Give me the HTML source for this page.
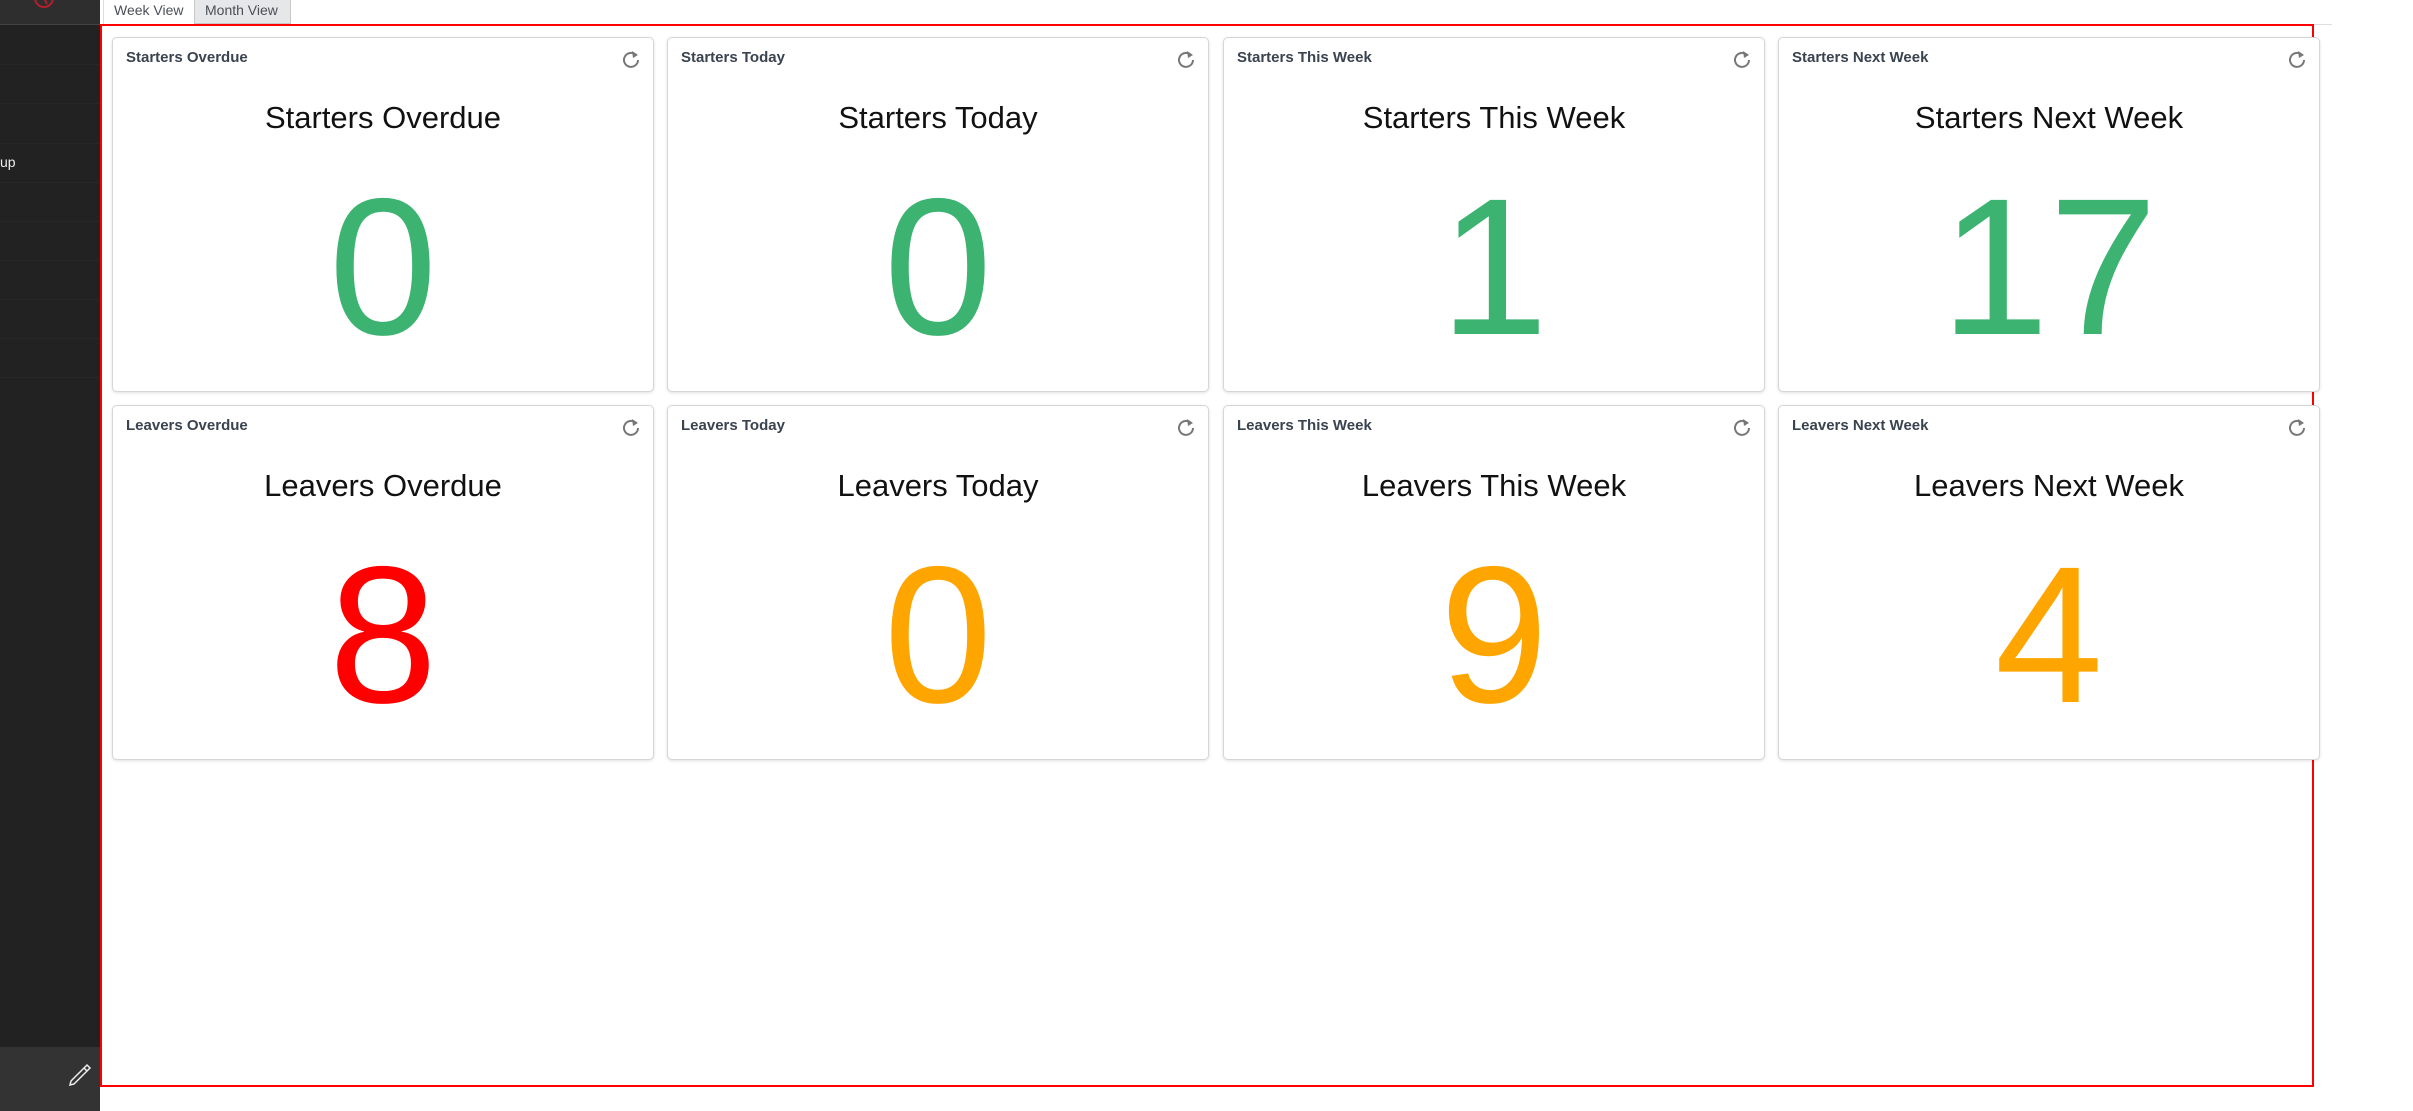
<!DOCTYPE html>
<html><head><meta charset="utf-8"><style>
*{margin:0;padding:0;box-sizing:border-box}
body{width:2413px;height:1111px;background:#fff;position:relative;overflow:hidden;font-family:"Liberation Sans",sans-serif}
#side{position:absolute;left:0;top:0;width:100px;height:1111px;background:#222}
#side .hd{position:absolute;left:0;top:0;width:100px;height:25px;background:#2e2e2e;border-bottom:1px solid #444;overflow:hidden}
#side .ln{position:absolute;left:0;width:100px;height:1px;background:#272727}
#side .ft{position:absolute;left:0;top:1047px;width:100px;height:64px;background:#333}
.tab{position:absolute;top:0;height:24px;font-size:14px;color:#4a4f57;line-height:20px;padding-left:10px}
#red{position:absolute;left:100px;top:24px;width:2214px;height:1063px;border:2px solid #f00}
.gl{position:absolute;left:290px;top:24px;width:2042px;height:1px;background:#ddd}
.card{position:absolute;width:542px;height:355px;border:1px solid #d6d6d6;border-radius:5px;background:#fff;box-shadow:0 1px 3px rgba(0,0,0,.12)}
.card .t{position:absolute;left:13px;top:13px;font-size:15px;line-height:14.5px;font-weight:bold;color:#3a4350;white-space:nowrap}
.card .b{position:absolute;left:0;width:100%;top:64px;text-align:center;font-size:31px;line-height:31px;color:#111;white-space:nowrap}
.card .n{position:absolute;left:0;width:100%;top:132px;text-align:center;font-size:195px;line-height:195px;white-space:nowrap}
.card svg{position:absolute;right:13px;top:11px}
.g{color:#3cb371}.r{color:#f00}.o{color:#ffa500}
</style></head><body>
<div id="side">
<div class="hd"><svg width="100" height="25" style="position:absolute;left:0;top:0"><circle cx="44" cy="-2" r="9" fill="none" stroke="#b0202a" stroke-width="2"/><path d="M44 -2 L47 4" stroke="#b0202a" stroke-width="2"/></svg></div>
<div class="ln" style="top:64px"></div><div class="ln" style="top:103px"></div><div class="ln" style="top:143px"></div><div class="ln" style="top:182px"></div><div class="ln" style="top:221px"></div><div class="ln" style="top:260px"></div><div class="ln" style="top:299px"></div><div class="ln" style="top:338px"></div><div class="ln" style="top:377px"></div>
<div style="position:absolute;left:0;top:154px;color:#eee;font-size:14px">up</div>
<div class="ft"><svg width="100" height="64" style="position:absolute;left:0;top:0"><path d="M71 34 L87 18 L90 21 L74 37 L70 38 Z M84 21 L87 24" fill="none" stroke="#eee" stroke-width="1.5"/></svg></div>
</div>
<div class="tab" style="left:103px;width:91px;background:#fff;border-left:1px solid #ddd">Week View</div>
<div class="tab" style="left:194px;width:97px;background:#e6e7e9;border:1px solid #c8c8c8;border-top:none">Month View</div>
<div class="gl"></div>
<div id="red"></div>

<div class="card" style="left:112px;top:37px"><div class="t">Starters Overdue</div><svg width="18" height="20" viewBox="0 0 18 20"><path d="M14 6 A7 7 0 1 0 16 11" fill="none" stroke="#777" stroke-width="2"/><path d="M10 2 L16 6 L11 9 Z" fill="#777"/></svg><div class="b">Starters Overdue</div><div class="n g">0</div></div>
<div class="card" style="left:667px;top:37px"><div class="t">Starters Today</div><svg width="18" height="20" viewBox="0 0 18 20"><path d="M14 6 A7 7 0 1 0 16 11" fill="none" stroke="#777" stroke-width="2"/><path d="M10 2 L16 6 L11 9 Z" fill="#777"/></svg><div class="b">Starters Today</div><div class="n g">0</div></div>
<div class="card" style="left:1223px;top:37px"><div class="t">Starters This Week</div><svg width="18" height="20" viewBox="0 0 18 20"><path d="M14 6 A7 7 0 1 0 16 11" fill="none" stroke="#777" stroke-width="2"/><path d="M10 2 L16 6 L11 9 Z" fill="#777"/></svg><div class="b">Starters This Week</div><div class="n g">1</div></div>
<div class="card" style="left:1778px;top:37px"><div class="t">Starters Next Week</div><svg width="18" height="20" viewBox="0 0 18 20"><path d="M14 6 A7 7 0 1 0 16 11" fill="none" stroke="#777" stroke-width="2"/><path d="M10 2 L16 6 L11 9 Z" fill="#777"/></svg><div class="b">Starters Next Week</div><div class="n g">17</div></div>

<div class="card" style="left:112px;top:405px"><div class="t">Leavers Overdue</div><svg width="18" height="20" viewBox="0 0 18 20"><path d="M14 6 A7 7 0 1 0 16 11" fill="none" stroke="#777" stroke-width="2"/><path d="M10 2 L16 6 L11 9 Z" fill="#777"/></svg><div class="b">Leavers Overdue</div><div class="n r">8</div></div>
<div class="card" style="left:667px;top:405px"><div class="t">Leavers Today</div><svg width="18" height="20" viewBox="0 0 18 20"><path d="M14 6 A7 7 0 1 0 16 11" fill="none" stroke="#777" stroke-width="2"/><path d="M10 2 L16 6 L11 9 Z" fill="#777"/></svg><div class="b">Leavers Today</div><div class="n o">0</div></div>
<div class="card" style="left:1223px;top:405px"><div class="t">Leavers This Week</div><svg width="18" height="20" viewBox="0 0 18 20"><path d="M14 6 A7 7 0 1 0 16 11" fill="none" stroke="#777" stroke-width="2"/><path d="M10 2 L16 6 L11 9 Z" fill="#777"/></svg><div class="b">Leavers This Week</div><div class="n o">9</div></div>
<div class="card" style="left:1778px;top:405px"><div class="t">Leavers Next Week</div><svg width="18" height="20" viewBox="0 0 18 20"><path d="M14 6 A7 7 0 1 0 16 11" fill="none" stroke="#777" stroke-width="2"/><path d="M10 2 L16 6 L11 9 Z" fill="#777"/></svg><div class="b">Leavers Next Week</div><div class="n o">4</div></div>
</body></html>
